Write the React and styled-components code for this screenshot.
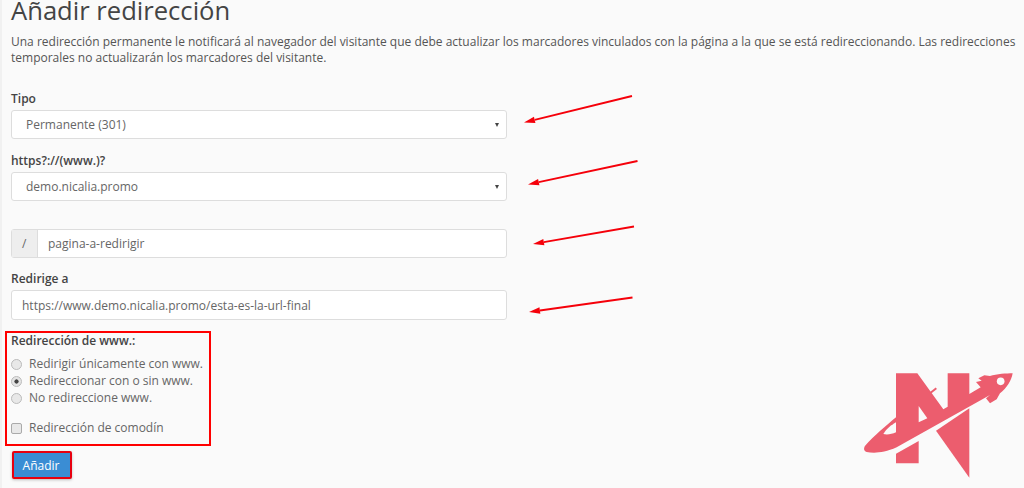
import React from "react";
import styled, { createGlobalStyle } from "styled-components";

const Global = createGlobalStyle`
  html, body { margin: 0; padding: 0; background: #fafafa; height: 488px; overflow: hidden; }
  * { box-sizing: border-box; }
`;

const Page = styled.main`
  position: relative;
  width: 1024px;
  height: 488px;
  overflow: hidden;
  padding: 0 0 0 9px;
  background: #fafafa;
  border-left: 2px solid #f1f1f1;
  font-family: "Open Sans", "Liberation Sans", sans-serif;
  font-size: 12px;
  color: #555;
`;

const Title = styled.h1`
  margin: 0;
  font-size: 25.6px;
  line-height: 22px;
  font-weight: 400;
  color: #444;
`;

const Intro = styled.p`
  margin: 12px 0 0;
  width: 1012px;
  line-height: 16px;
  color: #555;
`;

const Form = styled.div`
  width: 496px;
  padding-top: 23px;
`;

const Label = styled.label`
  display: block;
  height: 20px;
  line-height: 20px;
  font-weight: 600;
  color: #444;
`;

const Field = styled.div`
  margin-top: ${(p) => p.$top}px;
`;

const Control = styled.div`
  display: flex;
  align-items: center;
  justify-content: space-between;
  height: ${(p) => p.$height || 29}px;
  margin-top: 1px;
  padding: 0 ${(p) => (p.$select ? 7 : 10)}px 0 ${(p) => (p.$select ? 14 : 10)}px;
  background: #fff;
  border: 1px solid #ddd;
  border-radius: 3px;
  color: #666;
`;

const Caret = styled.span`
  width: 0;
  height: 0;
  border-left: 2.5px solid transparent;
  border-right: 2.5px solid transparent;
  border-top: 4px solid #444;
`;

const InputGroup = styled.div`
  display: flex;
  height: 29px;
  background: #fff;
  border: 1px solid #ddd;
  border-radius: 3px;
  color: #666;
`;

const Addon = styled.span`
  width: 26px;
  padding-left: 10px;
  line-height: 27px;
  background: #eee;
  border-right: 1px solid #ddd;
`;

const GroupText = styled.span`
  padding-left: 10px;
  line-height: 27px;
`;

const WwwBox = styled.fieldset`
  width: 206px;
  height: 115px;
  margin: 11px 0 0 -6px;
  padding: 0 0 0 4px;
  border: 2px solid #f00;
  display: block;
`;

const BoxTitle = styled.div`
  height: 18px;
  line-height: 16px;
  font-weight: 600;
  color: #444;
`;

const Options = styled.div`
  margin-top: 4px;
  display: flex;
  flex-direction: column;
`;

const Option = styled.div`
  display: flex;
  align-items: center;
  gap: 7px;
  height: 17px;
  margin-top: ${(p) => p.$gap || 0}px;
  white-space: nowrap;
  color: #666;
`;

const Radio = styled.span`
  flex: none;
  width: 11px;
  height: 11px;
  margin-top: 2px;
  border-radius: 50%;
  border: 1px solid #bbb;
  background: ${(p) =>
    p.$on
      ? "radial-gradient(circle, #444 0 1.8px, #e4e4e4 2.4px)"
      : "#e8e8e8"};
`;

const Check = styled.span`
  flex: none;
  width: 11px;
  height: 11px;
  margin-top: 2px;
  border-radius: 2px;
  border: 1px solid #aaa;
  background: #e8e8e8;
`;

const Submit = styled.button`
  display: block;
  width: 60px;
  height: 28px;
  margin: 5px 0 0 1px;
  padding: 0 2px 0 0;
  border: 2px solid #e8000f;
  border-radius: 2px;
  background: #3a8dd4;
  color: #fff;
  font: inherit;
  box-shadow: 0 1px 3px rgba(0, 0, 0, 0.25);
`;

const Overlay = styled.svg`
  position: absolute;
  left: -2px;
  top: 0;
  pointer-events: none;
`;

const Logo = styled.svg`
  position: absolute;
  left: 848px;
  top: 360px;
`;

const arrows = [
  [632, 96, 524, 122.5],
  [637.5, 161, 528, 184.5],
  [634, 226.5, 533, 244],
  [632.5, 297.5, 529, 312],
];

function Arrow({ x1, y1, x2, y2 }) {
  const a = Math.atan2(y1 - y2, x1 - x2);
  const cx = x2 + Math.cos(a) * 11;
  const cy = y2 + Math.sin(a) * 11;
  const nx = -Math.sin(a) * 3.2;
  const ny = Math.cos(a) * 3.2;
  return (
    <g>
      <line x1={x1} y1={y1} x2={cx} y2={cy} stroke="#f5000a" strokeWidth="1.9" />
      <polygon
        points={`${x2},${y2} ${cx + nx},${cy + ny} ${cx - nx},${cy - ny}`}
        fill="#f5000a"
      />
    </g>
  );
}

export default function App() {
  return (
    <Page>
      <Global />
      <Title>Añadir redirección</Title>
      <Intro>
        Una redirección permanente le notificará al navegador del visitante que debe actualizar los
        marcadores vinculados con la página a la que se está redireccionando. Las redirecciones
        temporales no actualizarán los marcadores del visitante.
      </Intro>
      <Form>
        <Field $top={0}>
          <Label>Tipo</Label>
          <Control $select>
            <span>Permanente (301)</span>
            <Caret />
          </Control>
        </Field>
        <Field $top={12}>
          <Label>https?://(www.)?</Label>
          <Control $select>
            <span>demo.nicalia.promo</span>
            <Caret />
          </Control>
        </Field>
        <Field $top={28}>
          <InputGroup>
            <Addon>/</Addon>
            <GroupText>pagina-a-redirigir</GroupText>
          </InputGroup>
        </Field>
        <Field $top={11}>
          <Label>Redirige a</Label>
          <Control $height={30}>
            <span>https://www.demo.nicalia.promo/esta-es-la-url-final</span>
          </Control>
        </Field>
        <WwwBox>
          <BoxTitle>Redirección de www.:</BoxTitle>
          <Options>
            <Option>
              <Radio />
              <span>Redirigir únicamente con www.</span>
            </Option>
            <Option>
              <Radio $on />
              <span>Redireccionar con o sin www.</span>
            </Option>
            <Option>
              <Radio />
              <span>No redireccione www.</span>
            </Option>
            <Option $gap={13}>
              <Check />
              <span>Redirección de comodín</span>
            </Option>
          </Options>
        </WwwBox>
        <Submit type="button">Añadir</Submit>
      </Form>
      <Overlay width="1024" height="488" viewBox="0 0 1024 488">
        {arrows.map(([x1, y1, x2, y2]) => (
          <Arrow key={y1} x1={x1} y1={y1} x2={x2} y2={y2} />
        ))}
      </Overlay>
      <Logo width="174" height="128" viewBox="0 0 522 384">
        <path
          fill="#ec5d6e"
          d="M138 40H202L280 148L293 140V40H358V102L392 82L378 66L395 62L385 55L403 46L420 48C440 42 470 40 488 40C485 60 470 85 450 100L440 118L420 130L408 115L420 105L140 262C100 280 70 280 50 276C40 272 40 262 48 254C70 230 110 195 138 172Z"
        />
        <path fill="#fafafa" d="M206 138L232 175L206 187Z" />
        <path fill="#fafafa" d="M100 222C110 205 125 195 138 187V217C125 223 110 225 100 222Z" />
        <circle cx="452" cy="64" r="11.5" fill="#fafafa" />
        <path fill="#ec5d6e" d="M138 310H206V243L138 281Z" />
        <path fill="#ec5d6e" d="M258 212L358 145V353Z" />
        <path stroke="#ec5d6e" strokeWidth="6" d="M240 100L259 85" />
      </Logo>
    </Page>
  );
}
